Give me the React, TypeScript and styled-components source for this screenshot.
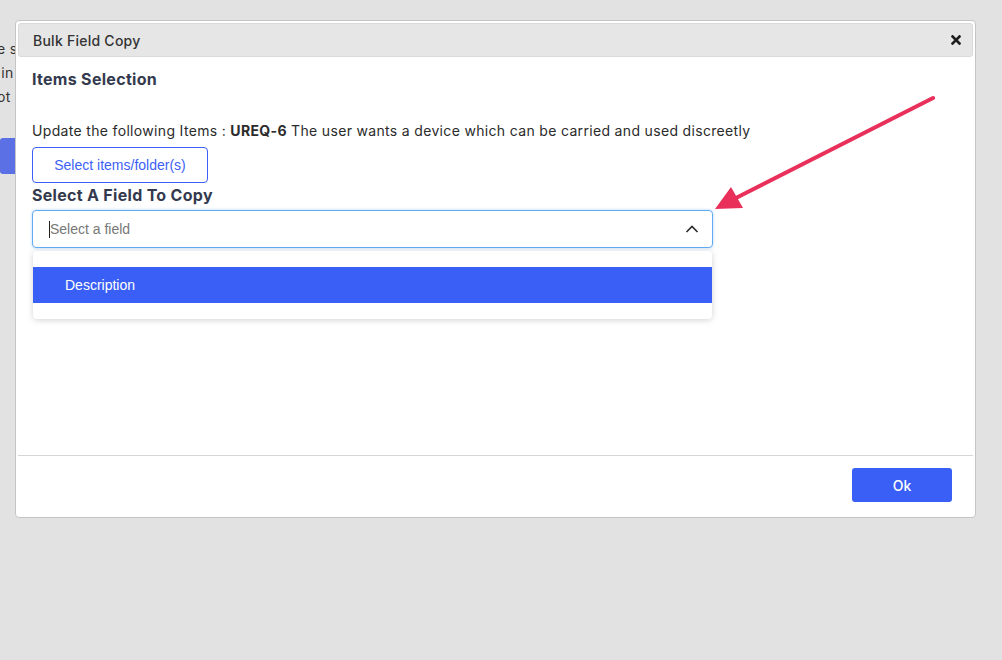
import React from "react";
import styled, { createGlobalStyle } from "styled-components";

const Global = createGlobalStyle`
  html, body { margin: 0; padding: 0; }
  body {
    background: #e2e2e2;
    font-family: Inter, "Open Sans", sans-serif;
    color: #333;
    width: 1002px;
    height: 660px;
    overflow: hidden;
  }
`;

const Page = styled.div`
  position: relative;
  width: 1002px;
  height: 660px;
  overflow: hidden;
`;

const BackPage = styled.div`
  display: flex;
  flex-direction: column;
  padding-top: 37px;
  margin-left: -3px;
`;

const BackLine = styled.div`
  font-size: 14px;
  line-height: 24px;
  letter-spacing: 0.3px;
  color: #333;
  white-space: nowrap;
`;

const BackButton = styled.div`
  margin-top: 29px;
  margin-left: 3px;
  width: 120px;
  height: 36px;
  background: #5a70e4;
  border-radius: 3px;
`;

const Dialog = styled.div`
  position: absolute;
  left: 15px;
  top: 20px;
  width: 955px;
  height: 492px;
  background: #fff;
  border: 1px solid #c5c5c5;
  border-radius: 4px;
  padding: 2px;
  display: flex;
  flex-direction: column;
  box-sizing: content-box;
`;

const TitleBar = styled.div`
  height: 32px;
  background: #e6e6e6;
  border: 1px solid #dadada;
  border-radius: 3px;
  display: flex;
  align-items: center;
  justify-content: space-between;
  padding: 0 10px 0 14px;
`;

const Title = styled.span`
  font-size: 14px;
  font-weight: 500;
  letter-spacing: 0.25px;
  color: #333;
`;

const CloseButton = styled.button`
  border: 0;
  background: transparent;
  padding: 0;
  width: 12px;
  height: 12px;
  display: flex;
  align-items: center;
  justify-content: center;
  cursor: pointer;
`;

const Body = styled.div`
  flex: 1;
  padding: 10px 14px 0 14px;
  display: flex;
  flex-direction: column;
`;

const SectionTitle = styled.h3<{ $mt?: number }>`
  margin: ${(p) => p.$mt ?? 0}px 0 0 0;
  font-size: 16px;
  line-height: 24px;
  font-weight: 700;
  letter-spacing: 0.3px;
  color: #343a4e;
`;

const InfoLine = styled.p`
  margin: 29px 0 0 0;
  font-size: 14px;
  line-height: 22px;
  letter-spacing: 0.33px;
  color: #2b2b2b;
  b { font-weight: 700; }
`;

const OutlineButton = styled.button`
  margin-top: 5px;
  width: 176px;
  height: 36px;
  border: 1px solid #3d5ff5;
  border-radius: 4px;
  background: #fff;
  color: #3d5ff5;
  font-family: "Liberation Sans", Arial, sans-serif;
  font-size: 14px;
  align-self: flex-start;
`;

const SelectBox = styled.div`
  margin-top: 3px;
  width: 681px;
  height: 38px;
  box-sizing: border-box;
  border: 1px solid #62aaf2;
  border-radius: 4px;
  box-shadow: 0 0 3px rgba(98, 170, 242, 0.5);
  display: flex;
  align-items: center;
  padding: 0 13px 0 16px;
`;

const Placeholder = styled.span`
  flex: 1;
  font-family: "Liberation Sans", Arial, sans-serif;
  font-size: 14px;
  color: #777;
  border-left: 1px solid #222;
  line-height: 17px;
`;

const Menu = styled.div`
  margin-top: 3px;
  margin-left: 1px;
  width: 679px;
  box-sizing: border-box;
  padding: 16px 0;
  background: #fff;
  border-radius: 4px;
  box-shadow: 0 1px 6px rgba(0, 0, 0, 0.18);
`;

const MenuItem = styled.div<{ $active?: boolean }>`
  height: 36px;
  display: flex;
  align-items: center;
  padding-left: 32px;
  font-family: "Liberation Sans", Arial, sans-serif;
  font-size: 14px;
  background: ${(p) => (p.$active ? "#3a5ff6" : "transparent")};
  color: ${(p) => (p.$active ? "#fff" : "#333")};
`;

const Footer = styled.div`
  border-top: 1px solid #d6d6d6;
  height: 60px;
  display: flex;
  justify-content: flex-end;
  align-items: flex-start;
  padding: 12px 21px 0 0;
  box-sizing: border-box;
`;

const PrimaryButton = styled.button`
  width: 100px;
  height: 34px;
  border: 0;
  border-radius: 3px;
  background: #3a5ff6;
  color: #fff;
  font-family: Inter, "Open Sans", sans-serif;
  font-size: 14px;
  font-weight: 500;
`;

const Arrow = styled.svg`
  position: absolute;
  left: 0;
  top: 0;
  pointer-events: none;
`;

export default function App() {
  return (
    <Page>
      <Global />
      <BackPage>
        <BackLine>e size of it</BackLine>
        <BackLine>&nbsp;in the list</BackLine>
        <BackLine>ot in the</BackLine>
        <BackButton />
      </BackPage>
      <Dialog>
        <TitleBar>
          <Title>Bulk Field Copy</Title>
          <CloseButton aria-label="close">
            <svg width="10" height="10" viewBox="0 0 10 10">
              <path d="M1.5 1.5 L8.5 8.5 M8.5 1.5 L1.5 8.5" stroke="#1e1e1e" strokeWidth="2.6" strokeLinecap="square" />
            </svg>
          </CloseButton>
        </TitleBar>
        <Body>
          <SectionTitle>Items Selection</SectionTitle>
          <InfoLine>
            Update the following Items : <b>UREQ-6</b> The user wants a device which can be carried and used discreetly
          </InfoLine>
          <OutlineButton>Select items/folder(s)</OutlineButton>
          <SectionTitle $mt={0}>Select A Field To Copy</SectionTitle>
          <SelectBox>
            <Placeholder>Select a field</Placeholder>
            <svg width="14" height="10" viewBox="0 0 14 10">
              <path d="M1.5 8 L7 2.5 L12.5 8" fill="none" stroke="#2a2a2a" strokeWidth="1.6" />
            </svg>
          </SelectBox>
          <Menu>
            <MenuItem $active>Description</MenuItem>
          </Menu>
        </Body>
        <Footer>
          <PrimaryButton>Ok</PrimaryButton>
        </Footer>
      </Dialog>
      <Arrow width="1002" height="660" viewBox="0 0 1002 660">
        <line x1="933" y1="98" x2="732" y2="200" stroke="#e8305a" strokeWidth="4" strokeLinecap="round" />
        <polygon points="715,209 731,187 743,208" fill="#e8305a" />
      </Arrow>
    </Page>
  );
}
